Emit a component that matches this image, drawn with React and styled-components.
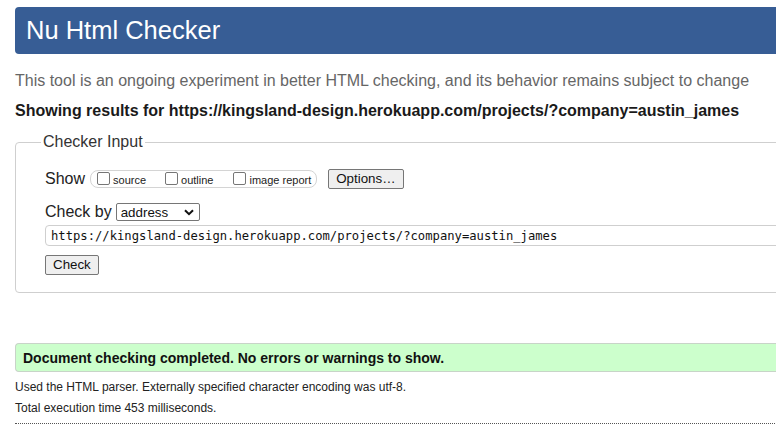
import React from "react";
import styled, { createGlobalStyle } from "styled-components";

const Global = createGlobalStyle`
  html, body { margin: 0; padding: 0; background: #fff; overflow: hidden; }
  body { font-family: "Liberation Sans", Arial, sans-serif; color: #222; }
`;

const Page = styled.div`
  width: 1100px;
  padding: 7px 0 0 15px;
`;

const Header = styled.h1`
  margin: 0;
  height: 47px;
  background: #375d95;
  border-radius: 4px;
  padding-left: 11px;
  color: #fff;
  font-weight: normal;
  font-size: 25.5px;
  line-height: 46px;
`;

const Intro = styled.p`
  margin: 17px 0 0;
  font-size: 16px;
  line-height: 20px;
  color: #666;
`;

const Results = styled.h2`
  margin: 10px 0 0;
  font-size: 16px;
  line-height: 20px;
  font-weight: bold;
  color: #1a1a1a;
`;

const Fieldset = styled.fieldset`
  margin: 12px 0 0;
  border: 1px solid #cfcfcf;
  border-radius: 4px;
  padding: 18px 0 17px 29px;
  min-width: 0;
`;

const Legend = styled.legend`
  font-size: 16px;
  line-height: 18px;
  color: #333;
  padding: 0 2px;
  margin-left: -4px;
`;

const Row = styled.div`
  display: flex;
  align-items: center;
  margin-top: ${(p) => p.$mt || 0}px;
`;

const Label = styled.span`
  font-size: 16px;
  color: #222;
`;

const CheckGroup = styled.div`
  display: flex;
  align-items: center;
  height: 16px;
  border: 1px solid #d4d4d4;
  border-radius: 8px;
  padding: 0 5px 0 6px;
  margin-left: 5px;
`;

const CheckItem = styled.label`
  display: flex;
  align-items: center;
  font-size: 11px;
  color: #222;
  margin-right: ${(p) => p.$mr || 0}px;
  padding-top: 1px;
`;

const Box = styled.span`
  width: 11px;
  height: 11px;
  border: 1px solid #767676;
  border-radius: 2px;
  background: #fff;
  margin-right: 3px;
  margin-top: -2px;
`;

const Button = styled.button`
  font-family: "Liberation Sans", Arial, sans-serif;
  font-size: 13.33px;
  color: #111;
  background: #efefef;
  border: 1px solid #767676;
  border-radius: 2px;
  height: 20px;
  padding: 0 ${(p) => p.$px || 6}px;
  margin-left: ${(p) => p.$ml || 0}px;
  line-height: 18px;
`;

const Select = styled.div`
  display: flex;
  align-items: center;
  justify-content: space-between;
  box-sizing: content-box;
  width: 73px;
  height: 16px;
  border: 1px solid #767676;
  border-radius: 2px;
  padding: 0 5px 0 4px;
  margin-left: 4px;
  font-size: 13.33px;
  color: #111;
`;

const UrlInput = styled.div`
  margin-top: 4px;
  height: 19px;
  border: 1px solid #cfcfcf;
  border-radius: 4px;
  padding-left: 5px;
  font-family: "DejaVu Sans Mono", "Liberation Mono", monospace;
  font-size: 12.2px;
  line-height: 20px;
  color: #111;
  white-space: nowrap;
`;

const Status = styled.div`
  margin-top: 50px;
  height: 27px;
  background: #ccffcc;
  border: 1px solid #c8d4c8;
  border-right: none;
  border-radius: 4px 0 0 4px;
  padding-left: 7px;
  font-size: 14px;
  font-weight: bold;
  line-height: 28px;
  color: #111;
`;

const Note = styled.p`
  margin: ${(p) => p.$mt || 0}px 0 0;
  font-size: 12px;
  line-height: 14px;
  color: #222;
`;

const Rule = styled.hr`
  margin: 8px 0 0;
  border: none;
  border-top: 1px dotted #555;
  height: 0;
`;

function Chevron() {
  return (
    <svg width="10" height="7" viewBox="0 0 10 7">
      <path d="M1 1.2 L5 5.2 L9 1.2" fill="none" stroke="#111" strokeWidth="2" />
    </svg>
  );
}

export default function App() {
  return (
    <>
      <Global />
      <Page>
        <Header>Nu Html Checker</Header>
        <Intro>
          This tool is an ongoing experiment in better HTML checking, and its behavior remains subject to change
        </Intro>
        <Results>Showing results for https://kingsland-design.herokuapp.com/projects/?company=austin_james</Results>
        <Fieldset>
          <Legend>Checker Input</Legend>
          <Row>
            <Label>Show</Label>
            <CheckGroup>
              <CheckItem $mr={19}><Box />source</CheckItem>
              <CheckItem $mr={20}><Box />outline</CheckItem>
              <CheckItem><Box />image report</CheckItem>
            </CheckGroup>
            <Button $ml={11} $px={7}>Options…</Button>
          </Row>
          <Row $mt={14}>
            <Label>Check by</Label>
            <Select>
              <span>address</span>
              <Chevron />
            </Select>
          </Row>
          <UrlInput>https://kingsland-design.herokuapp.com/projects/?company=austin_james</UrlInput>
          <Row $mt={9}>
            <Button $px={7}>Check</Button>
          </Row>
        </Fieldset>
        <Status>Document checking completed. No errors or warnings to show.</Status>
        <Note $mt={8}>Used the HTML parser. Externally specified character encoding was utf-8.</Note>
        <Note $mt={7}>Total execution time 453 milliseconds.</Note>
        <Rule />
      </Page>
    </>
  );
}
